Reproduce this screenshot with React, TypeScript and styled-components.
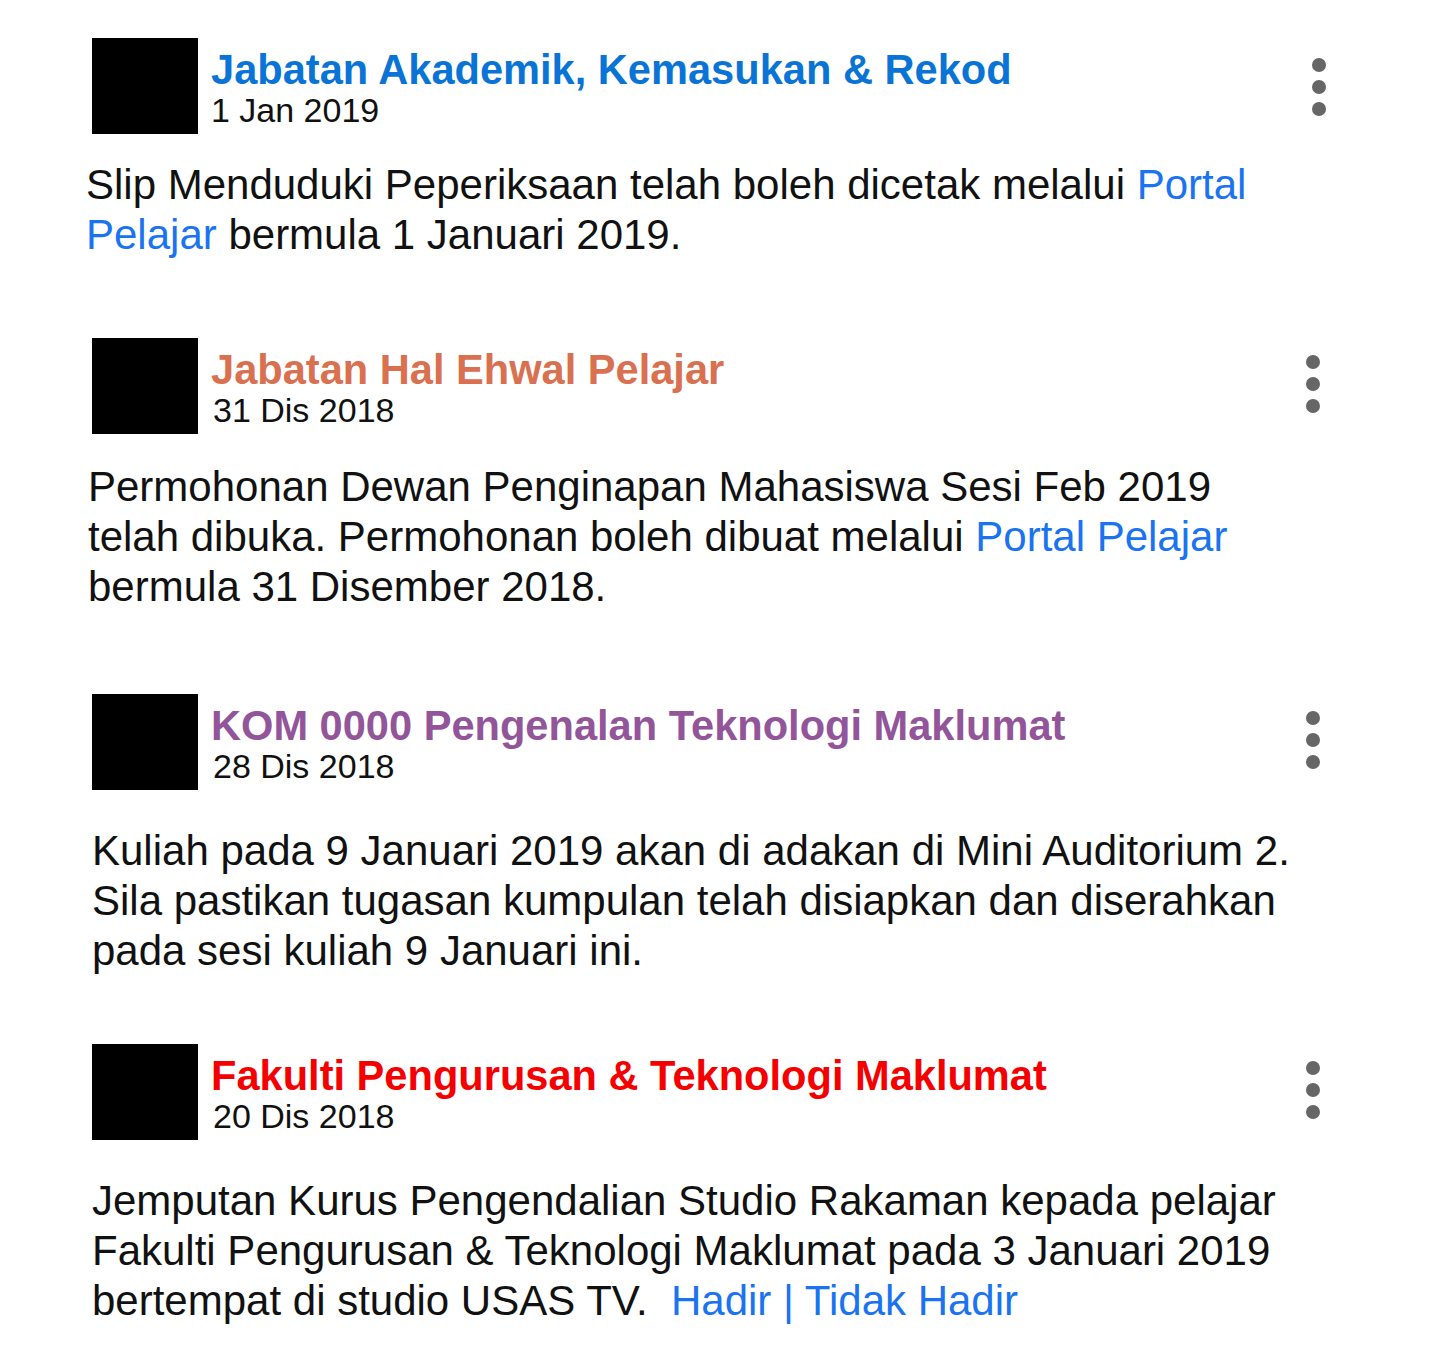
import React from "react";
import styled, { createGlobalStyle } from "styled-components";

const Global = createGlobalStyle`
  html, body { margin: 0; padding: 0; background: #fff; }
  body { font-family: "Liberation Sans", Arial, sans-serif; color: #111; }
`;

const Feed = styled.main`
  display: flex;
  flex-direction: column;
  padding: 38px 0 0 92px;
  width: 1440px;
  box-sizing: border-box;
`;

const Post = styled.article<{ $gap: number }>`
  display: flex;
  flex-direction: column;
  margin-bottom: ${(p) => p.$gap}px;
`;

const Header = styled.header`
  display: flex;
  align-items: flex-start;
  width: 1234px;
`;

const Avatar = styled.div`
  width: 106px;
  height: 96px;
  background: #000;
  flex: none;
`;

const Meta = styled.div`
  display: flex;
  flex-direction: column;
  flex: 1;
  padding-left: 13px;
  padding-top: 9px;
`;

const Title = styled.h2<{ $color: string }>`
  margin: 0;
  font-size: 41.6px;
  line-height: 46px;
  font-weight: 700;
  color: ${(p) => p.$color};
  white-space: nowrap;
`;

const DateText = styled.div<{ $shift: number }>`
  font-size: 34px;
  line-height: 35px;
  color: #111;
  padding-left: ${(p) => p.$shift}px;
`;

const MenuButton = styled.button<{ $x: number; $y: number }>`
  display: flex;
  flex-direction: column;
  align-items: center;
  gap: 8px;
  border: 0;
  background: none;
  padding: 0;
  margin-top: ${(p) => p.$y}px;
  margin-right: ${(p) => p.$x}px;
  cursor: pointer;
`;

const Dot = styled.span`
  width: 14px;
  height: 14px;
  border-radius: 50%;
  background: #666;
`;

const Body = styled.p<{ $indent: number; $top: number }>`
  margin: ${(p) => p.$top}px 0 0 ${(p) => p.$indent}px;
  font-size: 42px;
  line-height: 50px;
  color: #111;
  white-space: nowrap;
`;

const Link = styled.a`
  color: #1a73f0;
  text-decoration: none;
`;

const Menu = ({ x, y }: { x: number; y: number }) => (
  <MenuButton $x={x} $y={y} aria-label="Menu">
    <Dot />
    <Dot />
    <Dot />
  </MenuButton>
);

export default function App() {
  return (
    <>
      <Global />
      <Feed>
        <Post $gap={78}>
          <Header>
            <Avatar />
            <Meta>
              <Title $color="#0a74d6">Jabatan Akademik, Kemasukan &amp; Rekod</Title>
              <DateText $shift={0}>1 Jan 2019</DateText>
            </Meta>
            <Menu x={0} y={20} />
          </Header>
          <Body $indent={-6} $top={26}>
            Slip Menduduki Peperiksaan telah boleh dicetak melalui <Link href="#">Portal</Link>
            <br />
            <Link href="#">Pelajar</Link> bermula 1 Januari 2019.
          </Body>
        </Post>
        <Post $gap={82}>
          <Header>
            <Avatar />
            <Meta>
              <Title $color="#d9704f">Jabatan Hal Ehwal Pelajar</Title>
              <DateText $shift={2}>31 Dis 2018</DateText>
            </Meta>
            <Menu x={6} y={17} />
          </Header>
          <Body $indent={-4} $top={28}>
            Permohonan Dewan Penginapan Mahasiswa Sesi Feb 2019
            <br />
            telah dibuka. Permohonan boleh dibuat melalui <Link href="#">Portal Pelajar</Link>
            <br />
            bermula 31 Disember 2018.
          </Body>
        </Post>
        <Post $gap={68}>
          <Header>
            <Avatar />
            <Meta>
              <Title $color="#93559a">KOM 0000 Pengenalan Teknologi Maklumat</Title>
              <DateText $shift={2}>28 Dis 2018</DateText>
            </Meta>
            <Menu x={6} y={17} />
          </Header>
          <Body $indent={0} $top={36}>
            Kuliah pada 9 Januari 2019 akan di adakan di Mini Auditorium 2.
            <br />
            Sila pastikan tugasan kumpulan telah disiapkan dan diserahkan
            <br />
            pada sesi kuliah 9 Januari ini.
          </Body>
        </Post>
        <Post $gap={0}>
          <Header>
            <Avatar />
            <Meta>
              <Title $color="#f50000">Fakulti Pengurusan &amp; Teknologi Maklumat</Title>
              <DateText $shift={2}>20 Dis 2018</DateText>
            </Meta>
            <Menu x={6} y={17} />
          </Header>
          <Body $indent={0} $top={36}>
            Jemputan Kurus Pengendalian Studio Rakaman kepada pelajar
            <br />
            Fakulti Pengurusan &amp; Teknologi Maklumat pada 3 Januari 2019
            <br />
            bertempat di studio USAS TV.&nbsp; <Link href="#">Hadir | Tidak Hadir</Link>
          </Body>
        </Post>
      </Feed>
    </>
  );
}
